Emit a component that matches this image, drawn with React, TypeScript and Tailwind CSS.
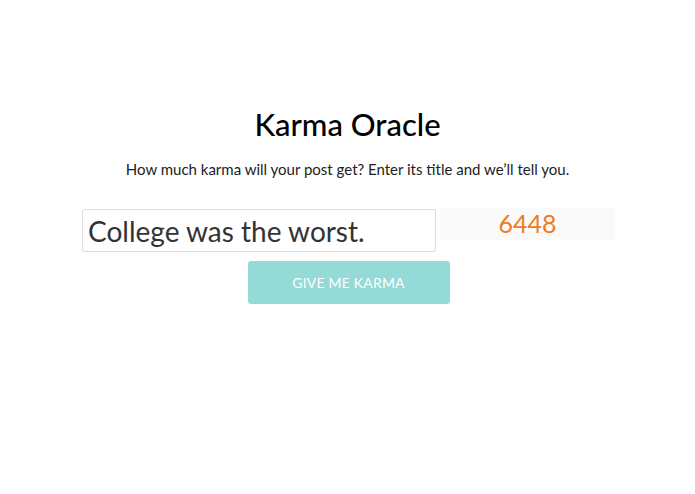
import React, { useState } from 'react';

const App: React.FC = () => {
  const [title, setTitle] = useState<string>('College was the worst.');
  const [karma] = useState<number>(6448);

  return (
    <div
      className="min-h-screen bg-white flex flex-col items-center pt-[105px] text-[#222]"
      style={{ fontFamily: 'Lato, "Open Sans", sans-serif' }}
    >
      <h1 className="text-[31px] leading-[38px] font-medium text-black">Karma Oracle</h1>
      <p className="mt-[16px] text-[15px] leading-[20px] text-[#222]">
        How much karma will your post get? Enter its title and we&rsquo;ll tell you.
      </p>

      <div className="mt-[30px] ml-[2px] flex items-start gap-[4px]">
        <input
          type="text"
          value={title}
          onChange={(e) => setTitle(e.target.value)}
          className="w-[354px] h-[43px] border border-[#ddd] rounded-[2px] px-[5px] text-[28px] text-[#333] outline-none"
          style={{ fontFamily: 'Lato, "Open Sans", sans-serif' }}
        />
        <div className="-mt-[1px] w-[175px] h-[32px] bg-[#fafafa] flex items-center justify-center text-[25px] text-[#f07b1e]">
          {karma}
        </div>
      </div>

      <button className="mt-[9px] ml-[2px] w-[202px] h-[43px] bg-[#94dad6] rounded-[3px] text-white text-[14px] tracking-[0.2px]">
        GIVE ME KARMA
      </button>
    </div>
  );
};

export default App;
